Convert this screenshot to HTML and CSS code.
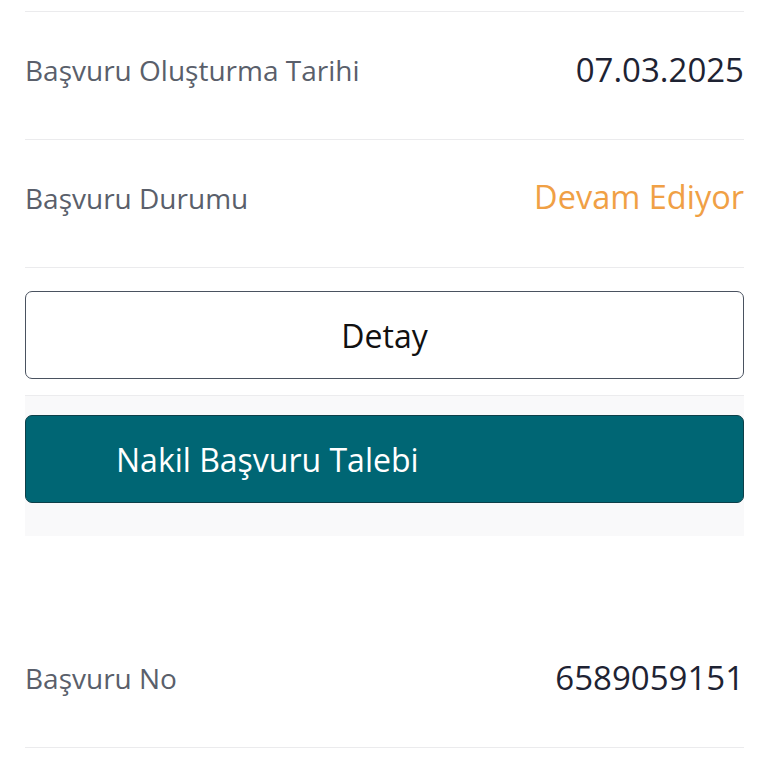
FILE: index.html
```html
<!DOCTYPE html>
<html lang="tr">
<head>
  <meta charset="UTF-8" />
  <title>Başvuru</title>
  <meta name="viewport" content="width=device-width, initial-scale=1.0" />
  <link rel="stylesheet" href="styles.css">
</head>
<body>

  <!-- BASVURU BILGILERI -->
  <div class="card">
    <div class="row">
      <span class="label">Başvuru Oluşturma Tarihi</span>
      <span class="value">07.03.2025</span>
    </div>
    <div class="row">
      <span class="label">Başvuru Durumu</span>
      <span class="value status">Devam Ediyor</span>
    </div>
    <div class="actions">
      <button class="btn-outline">Detay</button>
    </div>
    <div class="panel">
      <button class="btn-primary">Nakil Başvuru Talebi</button>
    </div>
  </div>

  <div class="card second">
    <div class="row no-top">
      <span class="label">Başvuru No</span>
      <span class="value">6589059151</span>
    </div>
  </div>

</body>
</html>
```

FILE: styles.css
```css
body {
  margin: 0;
  padding-top: 11px;
  background-color: #fff;
  font-family: "Open Sans", Lato, sans-serif;
}
.card {
  margin: 0 24px 0 25px;
}
.row {
  display: flex;
  justify-content: space-between;
  align-items: center;
  height: 127px;
  border-top: 1px solid #ebebed;
}
.row.no-top {
  border-top: none;
  border-bottom: 1px solid #ebebed;
}
.label {
  color: #5a5f6b;
  font-size: 28px;
  line-height: 1;
  padding-bottom: 12px;
}
.value {
  color: #1e2333;
  font-size: 33px;
  line-height: 1;
  padding-bottom: 12px;
}
.status {
  color: #f0a045;
  font-size: 32.5px;
}
.actions {
  border-top: 1px solid #ebebed;
  padding: 23px 0 16px;
}
.btn-outline, .btn-primary {
  display: block;
  width: 100%;
  height: 88px;
  border-radius: 7px;
  font-family: inherit;
  cursor: pointer;
}
.btn-outline {
  background: #fff;
  border: 1px solid #4a5260;
  color: #111;
  font-size: 32px;
}
.panel {
  background-color: #f9f9fa;
  border-top: 1px solid #ececee;
  padding: 19px 0 33px;
}
.btn-primary {
  background-color: #006674;
  border: 1px solid #0d3f48;
  color: #fff;
  font-size: 32px;
  text-align: left;
  padding-left: 90px;
}
.second {
  margin-top: 84px;
}
```
